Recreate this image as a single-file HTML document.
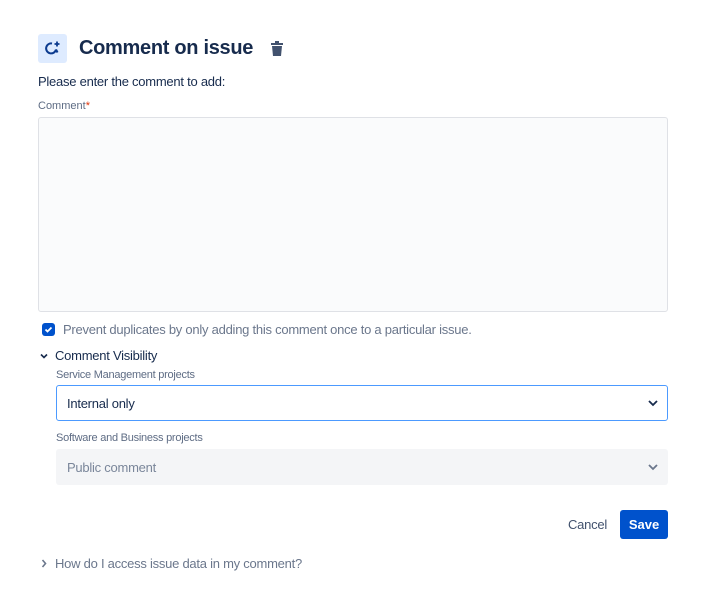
<!DOCTYPE html>
<html><head><style>
body{margin:0;background:#fff;font-family:"Liberation Sans",sans-serif;width:715px;height:604px;position:relative;overflow:hidden;color:#172b4d}
.a{position:absolute;white-space:nowrap}
.t{letter-spacing:-0.25px}
</style></head><body>
<div class="a" style="left:38px;top:34px;width:29px;height:29px;background:#deebff;border-radius:3px"></div>
<svg class="a" style="left:43px;top:39px" width="19" height="19" viewBox="0 0 19 19"><path d="M13 10.5A5 5 0 1 1 9 4.5" fill="none" stroke="#0c3b8f" stroke-width="2"/><path d="M14 2.5v5M11.5 5h5" stroke="#0c3b8f" stroke-width="1.8"/><path d="M13 10.5l1.5 3" stroke="#0c3b8f" stroke-width="2"/></svg>
<div class="a" style="left:79px;top:37px;font-size:20px;font-weight:bold;color:#172b4d;letter-spacing:-0.3px">Comment on issue</div>
<svg class="a" style="left:270px;top:41px" width="14" height="15" viewBox="0 0 14 15"><rect x="1" y="2" width="12" height="2" fill="#42526e"/><rect x="5" y="0" width="4" height="2" fill="#42526e"/><path d="M2 5h10l-1 10H3z" fill="#42526e"/></svg>
<div class="a t" style="left:38px;top:74px;font-size:13px;color:#172b4d">Please enter the comment to add:</div>
<div class="a" style="left:38px;top:100px;font-size:11px;color:#5e6c84">Comment<span style="color:#de350b">*</span></div>
<div class="a" style="left:38px;top:117px;width:628px;height:193px;background:#fafbfc;border:1px solid #dfe1e6;border-radius:3px"></div>
<div class="a" style="left:42px;top:323px;width:13px;height:13px;background:#0052cc;border-radius:3px"></div>
<svg class="a" style="left:42px;top:323px" width="13" height="13"><path d="M3.5 6.5l2 2 4-4" fill="none" stroke="#fff" stroke-width="1.8"/></svg>
<div class="a t" style="left:63px;top:322px;font-size:13px;color:#6b778c">Prevent duplicates by only adding this comment once to a particular issue.</div>
<svg class="a" style="left:40px;top:352px" width="8" height="8"><path d="M1 2.5l3 3 3-3" fill="none" stroke="#172b4d" stroke-width="1.6"/></svg>
<div class="a t" style="left:55px;top:348px;font-size:13px;color:#172b4d">Comment Visibility</div>
<div class="a t" style="left:56px;top:369px;font-size:11px;color:#5e6c84">Service Management projects</div>
<div class="a" style="left:56px;top:385px;width:610px;height:34px;border:1px solid #4c9aff;border-radius:3px;background:#fff"></div>
<div class="a t" style="left:67px;top:396px;font-size:13px;color:#172b4d">Internal only</div>
<svg class="a" style="left:647px;top:398px" width="12" height="10"><path d="M2 3l4 4 4-4" fill="none" stroke="#172b4d" stroke-width="1.8"/></svg>
<div class="a t" style="left:56px;top:432px;font-size:11px;color:#5e6c84">Software and Business projects</div>
<div class="a" style="left:56px;top:449px;width:612px;height:36px;background:#f4f5f7;border-radius:3px"></div>
<div class="a t" style="left:67px;top:460px;font-size:13px;color:#7a869a">Public comment</div>
<svg class="a" style="left:647px;top:462px" width="12" height="10"><path d="M2 3l4 4 4-4" fill="none" stroke="#6b778c" stroke-width="1.8"/></svg>
<div class="a t" style="left:568px;top:517px;font-size:13px;color:#42526e">Cancel</div>
<div class="a" style="left:620px;top:510px;width:48px;height:29px;background:#0052cc;border-radius:3px;color:#fff;font-size:13px;font-weight:bold;text-align:center;line-height:29px">Save</div>
<svg class="a" style="left:40px;top:559px" width="8" height="9"><path d="M2.5 1l3 3.5-3 3.5" fill="none" stroke="#6b778c" stroke-width="1.6"/></svg>
<div class="a t" style="left:55px;top:556px;font-size:13px;color:#6b778c">How do I access issue data in my comment?</div>
</body></html>
